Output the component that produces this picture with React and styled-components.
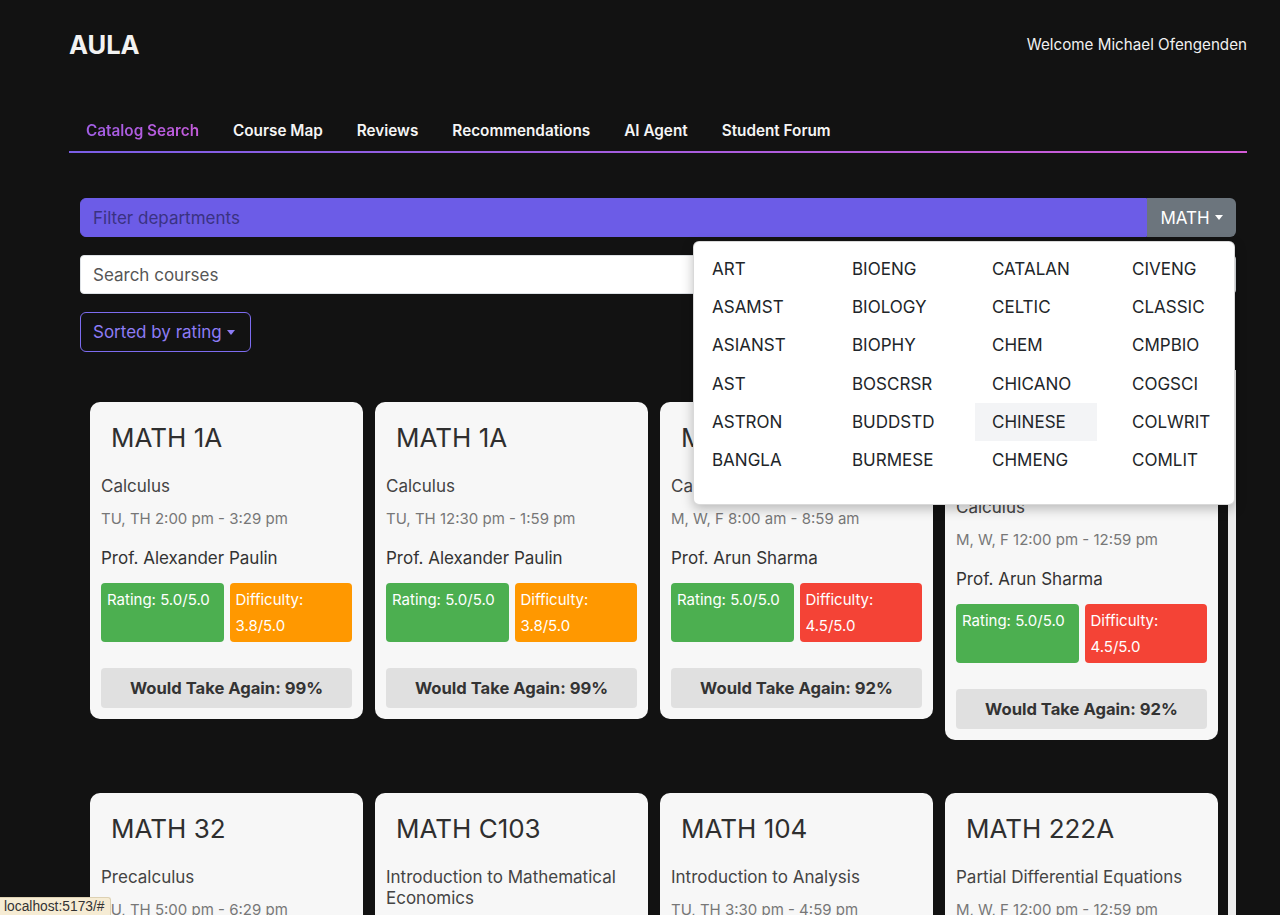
import React from 'react';
import styled, { createGlobalStyle } from 'styled-components';

const GlobalStyle = createGlobalStyle`
  html, body {
    margin: 0;
    padding: 0;
    background: #121212;
    font-family: Inter, 'Noto Sans', sans-serif;
  }
  * { box-sizing: border-box; }
`;

const Page = styled.div`
  min-height: 100vh;
  padding: 0 33px 0 69px;
  background: #121212;
`;

const Header = styled.header`
  height: 88px;
  display: flex;
  align-items: center;
  justify-content: space-between;
`;

const Logo = styled.h1`
  margin: 0;
  font-size: 25.5px;
  font-weight: 700;
  color: #f2f2f2;
`;

const Welcome = styled.span`
  font-size: 15.2px;
  color: #f0f0f0;
`;

const Nav = styled.nav`
  margin-top: 21px;
  display: flex;
  border-bottom: 2px solid transparent;
  border-image: linear-gradient(to right, #7a5ee6, #d35bd6) 1;
`;

const Tab = styled.a`
  padding: 11px 17px 9px;
  line-height: 22px;
  font-size: 15.3px;
  font-weight: 600;
  color: #f5f5f5;
  text-decoration: none;
  cursor: pointer;
  ${p => p.$active && `
    background: linear-gradient(to right, #9a5ee6, #c95bd8);
    -webkit-background-clip: text;
    background-clip: text;
    color: transparent;
  `}
`;

const Content = styled.main`
  padding: 45px 11px 0 11px;
`;

const FilterGroup = styled.div`
  position: relative;
  display: flex;
  height: 39px;
`;

const FilterInput = styled.input`
  flex: 1;
  border: 1px solid #6c5ce7;
  background: #6c5ce7;
  border-radius: 6px 0 0 6px;
  padding: 0 12px;
  font-family: inherit;
  font-size: 17px;
  color: #1f1b4d;
  outline: none;
  &::placeholder { color: #3a3282; }
`;

const Caret = styled.span`
  display: inline-block;
  margin-left: 5px;
  vertical-align: 3px;
  border-top: 5px solid currentColor;
  border-left: 4.5px solid transparent;
  border-right: 4.5px solid transparent;
`;

const DeptButton = styled.button`
  width: 89px;
  border: none;
  background: #6c757d;
  color: #fff;
  border-radius: 0 6px 6px 0;
  font-family: inherit;
  font-size: 17px;
  padding: 0 12px;
  display: flex;
  align-items: center;
  justify-content: center;
`;

const DeptMenu = styled.div`
  position: absolute;
  top: calc(100% + 4px);
  right: 1px;
  width: 542px;
  height: 264px;
  background: #fff;
  border: 1px solid rgba(0, 0, 0, 0.15);
  border-radius: 6px;
  padding: 8px 0 26px 1px;
  display: grid;
  grid-template-columns: repeat(4, 122px);
  grid-auto-rows: 38.2px;
  column-gap: 18px;
  z-index: 10;
  box-shadow: 0 4px 12px rgba(0, 0, 0, 0.25);
`;

const DeptItem = styled.a`
  display: flex;
  align-items: center;
  padding: 0 17px;
  font-size: 17px;
  color: #212529;
  background: ${p => (p.$hover ? '#f3f4f6' : 'transparent')};
`;

const SearchInput = styled.input`
  display: block;
  width: 100%;
  height: 39px;
  margin-top: 18px;
  border: 1px solid #dee2e6;
  border-radius: 4px;
  background: #fff;
  padding: 0 12px;
  font-family: inherit;
  font-size: 17px;
  outline: none;
  &::placeholder { color: #565656; }
`;

const SortButton = styled.button`
  margin-top: 18px;
  height: 40px;
  width: 171px;
  border: 1px solid #7d6cf0;
  border-radius: 6px;
  background: transparent;
  color: #8d7cf5;
  font-family: inherit;
  font-size: 17px;
  padding: 0 12px;
  display: flex;
  align-items: center;
`;

const Results = styled.section`
  margin-top: 18px;
  padding: 32px 10px 40px 10px;
  border-right: 8px solid #ececec;
  display: grid;
  grid-template-columns: repeat(4, 1fr);
  column-gap: 12px;
  row-gap: 53px;
  align-items: start;
`;

const Card = styled.article`
  margin-top: ${p => p.$offset || 0}px;
  background: #f7f7f7;
  border-radius: 10px;
  padding: 11px;
  color: #333;
`;

const CardTitle = styled.h2`
  margin: 0;
  padding: 10px;
  font-size: 26px;
  line-height: 30px;
  font-weight: 400;
  color: #2f2f2f;
`;

const CardSubtitle = styled.div`
  margin-top: 13px;
  font-size: 17px;
  line-height: 21px;
  color: #444;
`;

const CardTime = styled.div`
  margin-top: 12px;
  font-size: 15px;
  line-height: 20px;
  color: #777;
`;

const CardProf = styled.div`
  margin-top: 18px;
  font-size: 17px;
  line-height: 22px;
  color: #333;
`;

const BadgeRow = styled.div`
  margin-top: 14px;
  display: grid;
  grid-template-columns: 1fr 1fr;
  gap: 6px;
`;

const toneColors = { green: '#4caf50', orange: '#ff9800', red: '#f44336' };

const Badge = styled.div`
  background: ${p => toneColors[p.$tone]};
  color: #fff;
  border-radius: 4px;
  padding: 4px 6px 3px;
  font-size: 15px;
  line-height: 26px;
`;

const TakeAgain = styled.div`
  margin-top: 26px;
  height: 40px;
  background: #e0e0e0;
  border-radius: 4px;
  display: flex;
  align-items: center;
  justify-content: center;
  font-size: 16.6px;
  font-weight: 700;
  color: #333;
`;

const StatusBar = styled.div`
  position: fixed;
  left: 0;
  bottom: 0;
  padding: 0 5px 0 4px;
  height: 18px;
  line-height: 18px;
  background: #f6ecd4;
  border: 1px solid #ddd1b3;
  border-left: none;
  border-bottom: none;
  border-top-right-radius: 3px;
  font-size: 13.8px;
  color: #333;
  font-family: 'Liberation Sans', Arial, sans-serif;
  z-index: 20;
`;

const tabs = ['Catalog Search', 'Course Map', 'Reviews', 'Recommendations', 'AI Agent', 'Student Forum'];

const depts = [
  ['ART', 'BIOENG', 'CATALAN', 'CIVENG'],
  ['ASAMST', 'BIOLOGY', 'CELTIC', 'CLASSIC'],
  ['ASIANST', 'BIOPHY', 'CHEM', 'CMPBIO'],
  ['AST', 'BOSCRSR', 'CHICANO', 'COGSCI'],
  ['ASTRON', 'BUDDSTD', 'CHINESE', 'COLWRIT'],
  ['BANGLA', 'BURMESE', 'CHMENG', 'COMLIT'],
];

const courses = [
  { code: 'MATH 1A', name: 'Calculus', time: 'TU, TH 2:00 pm - 3:29 pm', prof: 'Alexander Paulin', rating: '5.0', diff: '3.8', again: 99 },
  { code: 'MATH 1A', name: 'Calculus', time: 'TU, TH 12:30 pm - 1:59 pm', prof: 'Alexander Paulin', rating: '5.0', diff: '3.8', again: 99 },
  { code: 'MATH 1A', name: 'Calculus', time: 'M, W, F 8:00 am - 8:59 am', prof: 'Arun Sharma', rating: '5.0', diff: '4.5', again: 92 },
  { code: 'MATH 1A', name: 'Calculus', time: 'M, W, F 12:00 pm - 12:59 pm', prof: 'Arun Sharma', rating: '5.0', diff: '4.5', again: 92, offset: 21 },
  { code: 'MATH 32', name: 'Precalculus', time: 'TU, TH 5:00 pm - 6:29 pm', prof: 'Alexander Paulin', rating: '4.9', diff: '2.9', again: 97 },
  { code: 'MATH C103', name: 'Introduction to Mathematical Economics', time: 'TU, TH 11:00 am - 12:29 pm', prof: 'Alexander Paulin', rating: '4.9', diff: '3.5', again: 95 },
  { code: 'MATH 104', name: 'Introduction to Analysis', time: 'TU, TH 3:30 pm - 4:59 pm', prof: 'Alexander Paulin', rating: '4.9', diff: '4.2', again: 95 },
  { code: 'MATH 222A', name: 'Partial Differential Equations', time: 'M, W, F 12:00 pm - 12:59 pm', prof: 'Daniel Tataru', rating: '4.8', diff: '4.4', again: 90 },
];

const diffTone = d => (parseFloat(d) >= 4 ? 'red' : parseFloat(d) >= 3 ? 'orange' : 'green');

function CourseCard({ course }) {
  return (
    <Card $offset={course.offset}>
      <CardTitle>{course.code}</CardTitle>
      <CardSubtitle>{course.name}</CardSubtitle>
      <CardTime>{course.time}</CardTime>
      <CardProf>Prof. {course.prof}</CardProf>
      <BadgeRow>
        <Badge $tone="green">Rating: {course.rating}/5.0</Badge>
        <Badge $tone={diffTone(course.diff)}>Difficulty: {course.diff}/5.0</Badge>
      </BadgeRow>
      <TakeAgain>Would Take Again: {course.again}%</TakeAgain>
    </Card>
  );
}

export default function App() {
  return (
    <>
      <GlobalStyle />
      <Page>
        <Header>
          <Logo>AULA</Logo>
          <Welcome>Welcome Michael Ofengenden</Welcome>
        </Header>
        <Nav>
          {tabs.map((t, i) => (
            <Tab key={t} $active={i === 0}>{t}</Tab>
          ))}
        </Nav>
        <Content>
          <FilterGroup>
            <FilterInput placeholder="Filter departments" />
            <DeptButton>MATH<Caret /></DeptButton>
            <DeptMenu>
              {depts.flat().map(d => (
                <DeptItem key={d} $hover={d === 'CHINESE'}>{d}</DeptItem>
              ))}
            </DeptMenu>
          </FilterGroup>
          <SearchInput placeholder="Search courses" />
          <SortButton>Sorted by rating<Caret /></SortButton>
          <Results>
            {courses.map((c, i) => (
              <CourseCard key={i} course={c} />
            ))}
          </Results>
        </Content>
      </Page>
      <StatusBar>localhost:5173/#</StatusBar>
    </>
  );
}
